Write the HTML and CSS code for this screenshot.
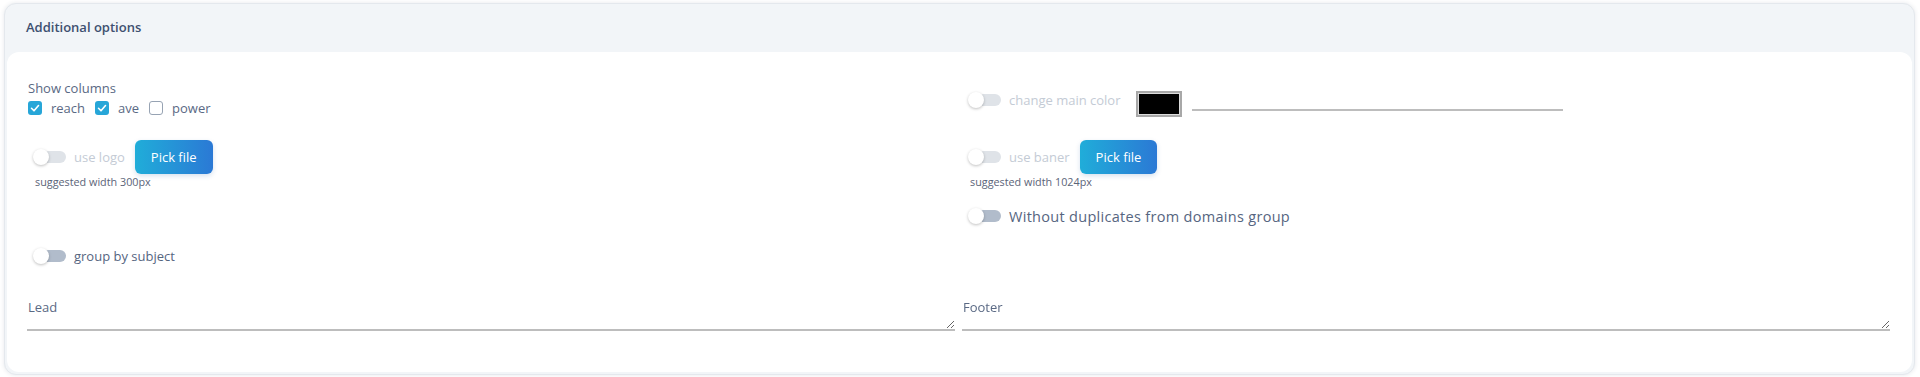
FILE: index.html
```html
<!DOCTYPE html>
<html lang="en">
<head>
    <meta charset="UTF-8">
    <meta name="viewport" content="width=device-width, initial-scale=1.0">
    <title>Additional options</title>
    <link rel="stylesheet" href="styles.css">
</head>
<body>

<div class="card">
    <div class="card-header">Additional options</div>
    <div class="card-body">
        <div class="options">

            <!-- row 1 -->
            <div class="cell">
                <div class="field-label">Show columns</div>
                <div class="checks">
                    <label class="check"><span class="box checked"><svg viewBox="0 0 14 14" width="14" height="14"><polyline points="3.5,7.3 6,9.8 10.5,4.6" fill="none" stroke="#fff" stroke-width="1.6" stroke-linecap="round" stroke-linejoin="round"/></svg></span> reach</label>
                    <label class="check"><span class="box checked"><svg viewBox="0 0 14 14" width="14" height="14"><polyline points="3.5,7.3 6,9.8 10.5,4.6" fill="none" stroke="#fff" stroke-width="1.6" stroke-linecap="round" stroke-linejoin="round"/></svg></span> ave</label>
                    <label class="check"><span class="box"></span> power</label>
                </div>
            </div>
            <div class="cell inline top color-row">
                <label class="switch disabled"><span class="toggle"></span><span class="switch-text">change main color</span></label>
                <span class="swatch"></span>
                <input class="line-input" type="text">
            </div>

            <!-- row 2 -->
            <div class="cell row-2">
                <div class="inline">
                    <label class="switch disabled"><span class="toggle"></span><span class="switch-text">use logo</span></label>
                    <button class="btn">Pick file</button>
                </div>
                <div class="hint">suggested width 300px</div>
            </div>
            <div class="cell row-2">
                <div class="inline">
                    <label class="switch disabled"><span class="toggle"></span><span class="switch-text">use baner</span></label>
                    <button class="btn">Pick file</button>
                </div>
                <div class="hint">suggested width 1024px</div>
            </div>

            <!-- row 3 -->
            <div class="cell"></div>
            <div class="cell">
                <label class="switch"><span class="toggle"></span><span class="switch-text big">Without duplicates from domains group</span></label>
            </div>

            <!-- row 4 -->
            <div class="cell">
                <label class="switch"><span class="toggle"></span><span class="switch-text">group by subject</span></label>
            </div>
            <div class="cell"></div>

            <!-- row 5 -->
            <div class="cell text-cell">
                <div class="field-label">Lead</div>
                <textarea class="area"></textarea>
            </div>
            <div class="cell text-cell">
                <div class="field-label">Footer</div>
                <textarea class="area"></textarea>
            </div>

        </div>
    </div>
</div>

</body>
</html>
```

FILE: styles.css
```css
body {
    margin: 0;
    background: #fff;
    font-family: "Open Sans", "Liberation Sans", sans-serif;
    color: #56657f;
}

.card {
    margin: 3px 5px 3px 4px;
    background: #f2f5f8;
    border: 1px solid #e4e8ed;
    border-radius: 12px;
    padding: 0 2px 2px;
    box-shadow: 0 0 4px rgba(40, 60, 90, 0.12);
}

.card-header {
    height: 48px;
    line-height: 46px;
    padding-left: 19px;
    font-size: 13px;
    font-weight: 600;
    color: #3e5070;
}

.card-body {
    background: #fff;
    border-radius: 12px;
    padding: 27px 21px 41px;
}

.options {
    display: grid;
    grid-template-columns: 1fr 1fr;
    column-gap: 7px;
    row-gap: 16px;
}

.cell {
    min-height: 24px;
}

.row-2 {
    margin-top: 7px;
}

.inline {
    display: flex;
    align-items: center;
}

.inline.top {
    align-items: flex-start;
}

.color-row {
    margin-top: 12px;
}

.field-label {
    font-size: 13px;
    line-height: 18px;
    color: #5a6984;
}

.checks {
    display: flex;
    align-items: center;
    margin-top: 3px;
    height: 16px;
}

.check {
    display: flex;
    align-items: center;
    font-size: 13px;
    color: #5a6984;
    margin-right: 10px;
}

.box {
    width: 14px;
    height: 14px;
    box-sizing: border-box;
    border: 1.5px solid #97a3b3;
    border-radius: 3px;
    margin-right: 9px;
    background: #fff;
    display: inline-block;
}

.box.checked {
    border: none;
    background: #27a6d8;
}

.box svg {
    display: block;
}

.switch {
    display: flex;
    align-items: center;
    height: 24px;
    margin-left: 5px;
    cursor: pointer;
}

.inline.top .switch {
    height: 18px;
}

.toggle {
    position: relative;
    width: 33px;
    height: 16px;
    margin-right: 8px;
    flex: none;
}

.toggle::before {
    content: "";
    position: absolute;
    left: 5px;
    right: 0;
    top: 2px;
    height: 12px;
    border-radius: 6px;
    background: #b1bccb;
}

.toggle::after {
    content: "";
    position: absolute;
    left: 0;
    top: 0;
    width: 16px;
    height: 16px;
    border-radius: 50%;
    background: #fff;
    box-shadow: 0 1px 3px rgba(0, 0, 0, 0.25);
}

.switch.disabled .toggle::before {
    background: #dfe3e8;
}

.switch-text {
    font-size: 13px;
    white-space: nowrap;
}

.switch-text.big {
    font-size: 14.5px;
    letter-spacing: 0.3px;
}

.switch.disabled .switch-text {
    color: #c4cbd5;
}

.btn {
    height: 34px;
    padding: 0 16px;
    margin-left: 10px;
    border: none;
    border-radius: 6px;
    background: linear-gradient(to right, #20add9, #2b79d5);
    color: #fff;
    font-family: inherit;
    font-size: 13px;
    font-weight: 500;
    box-shadow: 0 2px 5px rgba(30, 90, 160, 0.18);
    cursor: pointer;
}

.hint {
    margin: 1px 0 0 7px;
    font-size: 10.8px;
    line-height: 13px;
    color: #5b6478;
}

.swatch {
    width: 46px;
    height: 26px;
    box-sizing: border-box;
    margin-left: 16px;
    background: #000;
    border: 2px solid #a8a8a8;
    outline: 1px solid #dcdcdc;
    outline-offset: -3px;
}

.line-input {
    width: 371px;
    height: 20px;
    margin-left: 10px;
    padding: 0;
    box-sizing: border-box;
    border: none;
    border-bottom: 2px solid #bdbdbd;
    outline: none;
    background: transparent;
}

.text-cell {
    margin-top: 14px;
}

.area {
    display: block;
    width: 100%;
    height: 15px;
    box-sizing: border-box;
    margin: 0 0 0 -1px;
    padding: 0;
    border: none;
    border-bottom: 2px solid #bdbdbd;
    outline: none;
    resize: vertical;
    font-family: inherit;
}
```
